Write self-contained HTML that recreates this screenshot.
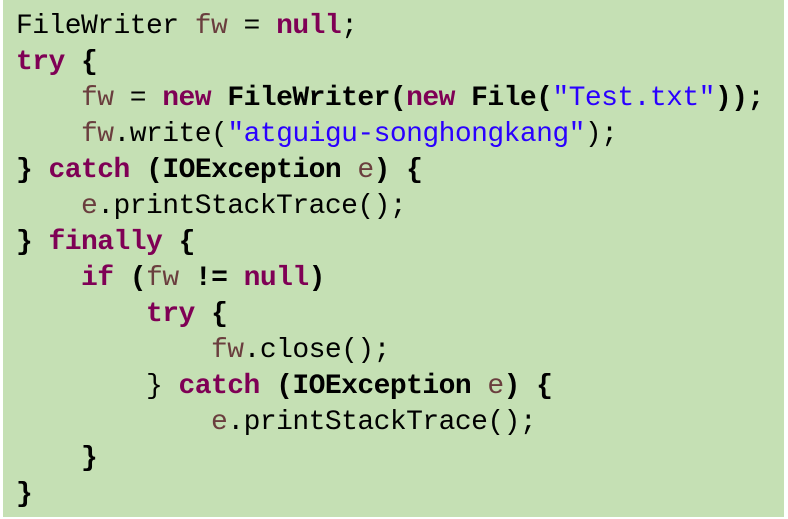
<!DOCTYPE html>
<html><head><style>
html,body{margin:0;padding:0;background:#fff;}
.b{position:absolute;left:3px;top:0;width:781px;height:517px;background:#c5e0b4;}
pre{margin:0;position:absolute;left:16px;top:9px;font-family:"Liberation Mono",monospace;font-size:28px;letter-spacing:-0.55px;line-height:36px;color:#000;}
.k{color:#7f0055;font-weight:bold}
.v{color:#6a3e3e}
.s{color:#2a00ff}
b{font-weight:bold}
</style></head><body><div class="b"></div>
<pre>FileWriter <span class="v">fw</span> = <span class="k">null</span>;
<span class="k">try</span> <b>{</b>
    <span class="v">fw</span> = <span class="k">new</span> <b>FileWriter(</b><span class="k">new</span> <b>File(</b><span class="s">"Test.txt"</span><b>));</b>
    <span class="v">fw</span>.write(<span class="s">"atguigu-songhongkang"</span>);
<b>}</b> <span class="k">catch</span> <b>(IOException</b> <span class="v">e</span><b>) {</b>
    <span class="v">e</span>.printStackTrace();
<b>}</b> <span class="k">finally</span> <b>{</b>
    <span class="k">if</span> <b>(</b><span class="v">fw</span> <b>!=</b> <span class="k">null</span><b>)</b>
        <span class="k">try</span> <b>{</b>
            <span class="v">fw</span>.close();
        } <span class="k">catch</span> <b>(IOException</b> <span class="v">e</span><b>) {</b>
            <span class="v">e</span>.printStackTrace();
    <b>}</b>
<b>}</b></pre>
</body></html>
